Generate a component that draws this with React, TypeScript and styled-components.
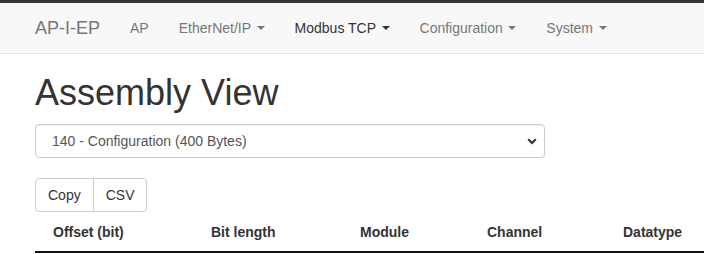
import React from "react";
import styled, { createGlobalStyle } from "styled-components";

const GlobalStyle = createGlobalStyle`
  html, body {
    margin: 0;
    padding: 0;
    overflow: hidden;
    background: #fff;
    font-family: "Liberation Sans", Arial, sans-serif;
    font-size: 14px;
    line-height: 1.42857;
    color: #333;
  }
  * {
    box-sizing: border-box;
  }
`;

const TopStrip = styled.div`
  height: 3px;
  background-color: #363636;
`;

const Navbar = styled.nav`
  display: flex;
  align-items: stretch;
  height: 51px;
  padding: 0 20px;
  background-color: #f8f8f8;
  border-bottom: 1px solid #e7e7e7;
`;

const Brand = styled.a`
  padding: 15px;
  font-size: 18px;
  line-height: 20px;
  color: #777;
  text-decoration: none;
`;

const NavList = styled.ul`
  display: flex;
  margin: 0;
  padding: 0;
  list-style: none;
`;

interface NavLinkProps {
  active?: boolean;
}

const NavLink = styled.a<NavLinkProps>`
  display: flex;
  align-items: center;
  padding: 15px;
  line-height: 20px;
  color: ${(props) => (props.active ? "#333" : "#777")};
  text-decoration: none;
  white-space: pre;
`;

const Caret = styled.span`
  display: inline-block;
  width: 0;
  height: 0;
  margin-left: 5.5px;
  border-top: 4px solid;
  border-right: 4px solid transparent;
  border-left: 4px solid transparent;
`;

const Container = styled.main`
  padding: 0 0 0 35px;
`;

const Title = styled.h1`
  margin: 19px 0 11px;
  font-size: 36px;
  font-weight: 500;
  line-height: 1.1;
  color: #333;
`;

const SelectWrap = styled.div`
  position: relative;
  width: 510px;
  margin-bottom: 20px;
`;

const Select = styled.select`
  display: block;
  width: 100%;
  height: 34px;
  padding: 6px 12px 6px 16px;
  font-family: inherit;
  font-size: 14px;
  color: #555;
  background-color: #fff;
  border: 1px solid #ccc;
  border-radius: 4px;
  box-shadow: inset 0 1px 1px rgba(0, 0, 0, 0.075);
  appearance: none;
  -webkit-appearance: none;
`;

const Chevron = styled.svg`
  position: absolute;
  right: 8px;
  top: 14px;
  pointer-events: none;
`;

const ButtonGroup = styled.div`
  display: inline-flex;
`;

interface ButtonProps {
  first?: boolean;
}

const Button = styled.button<ButtonProps>`
  height: 34px;
  padding: 6px 12px;
  margin-left: ${(props) => (props.first ? "0" : "-1px")};
  font-family: inherit;
  font-size: 14px;
  line-height: 20px;
  color: #333;
  background-color: #fff;
  border: 1px solid #ccc;
  border-radius: ${(props) => (props.first ? "4px 0 0 4px" : "0 4px 4px 0")};
`;

const Table = styled.table`
  width: 100%;
  table-layout: fixed;
  border-collapse: collapse;
`;

const HeadCell = styled.th`
  padding: 10px 18px 9px;
  font-weight: bold;
  line-height: 20px;
  text-align: left;
  color: #333;
  white-space: nowrap;
  border-bottom: 2px solid #111;
`;

const columns = [
  { label: "Offset (bit)", width: 158 },
  { label: "Bit length", width: 149 },
  { label: "Module", width: 127 },
  { label: "Channel", width: 136 },
  { label: "Datatype" },
];

const navItems = [
  { label: "AP", dropdown: false },
  { label: "EtherNet/IP", dropdown: true },
  { label: "Modbus TCP", dropdown: true, active: true },
  { label: "Configuration", dropdown: true },
  { label: "System", dropdown: true },
];

const App = () => {
  return (
    <>
      <GlobalStyle />
      <TopStrip />
      <Navbar>
        <Brand href="#">AP-I-EP</Brand>
        <NavList>
          {navItems.map((item) => (
            <li key={item.label}>
              <NavLink href="#" active={item.active}>
                {item.label}
                {item.dropdown && <Caret />}
              </NavLink>
            </li>
          ))}
        </NavList>
      </Navbar>
      <Container>
        <Title>Assembly View</Title>
        <SelectWrap>
          <Select defaultValue="140">
            <option value="140">140 - Configuration (400 Bytes)</option>
          </Select>
          <Chevron width="10" height="7" viewBox="0 0 10 7">
            <path d="M1.2 1.2 L5 5 L8.8 1.2" fill="none" stroke="#333" strokeWidth="2" />
          </Chevron>
        </SelectWrap>
        <ButtonGroup>
          <Button first>Copy</Button>
          <Button>CSV</Button>
        </ButtonGroup>
        <Table>
          <colgroup>
            {columns.map((c) => (
              <col key={c.label} style={c.width ? { width: c.width } : undefined} />
            ))}
          </colgroup>
          <thead>
            <tr>
              {columns.map((c) => (
                <HeadCell key={c.label}>{c.label}</HeadCell>
              ))}
            </tr>
          </thead>
        </Table>
      </Container>
    </>
  );
};

export default App;
